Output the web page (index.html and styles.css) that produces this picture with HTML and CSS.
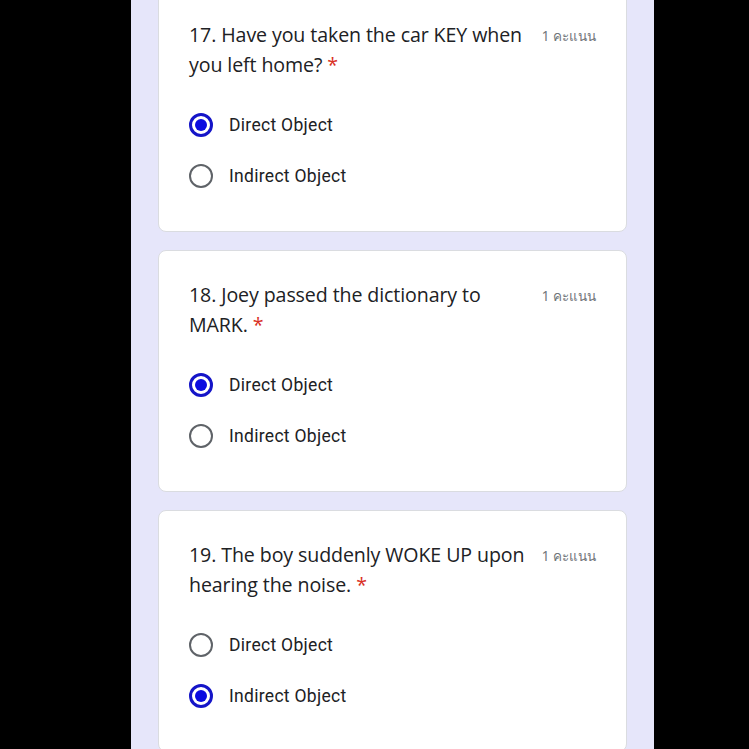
FILE: index.html
```html
<!DOCTYPE html>
<html>
<head>
<meta charset="utf-8">
<link rel="stylesheet" href="styles.css">
</head>
<body>
<div class="column">
  <div class="cards">
    <div class="card">
      <div class="head">
        <div class="question">17. Have you taken the car KEY when you left home?&nbsp;<span class="req">*</span></div>
        <div class="points">1 คะแนน</div>
      </div>
      <div class="options">
        <div class="option"><span class="radio checked"></span><span class="label">Direct Object</span></div>
        <div class="option"><span class="radio"></span><span class="label">Indirect Object</span></div>
      </div>
    </div>
    <div class="card">
      <div class="head">
        <div class="question">18. Joey passed the dictionary to MARK.&nbsp;<span class="req">*</span></div>
        <div class="points">1 คะแนน</div>
      </div>
      <div class="options">
        <div class="option"><span class="radio checked"></span><span class="label">Direct Object</span></div>
        <div class="option"><span class="radio"></span><span class="label">Indirect Object</span></div>
      </div>
    </div>
    <div class="card">
      <div class="head">
        <div class="question">19. The boy suddenly WOKE UP upon hearing the noise.&nbsp;<span class="req">*</span></div>
        <div class="points">1 คะแนน</div>
      </div>
      <div class="options">
        <div class="option"><span class="radio"></span><span class="label">Direct Object</span></div>
        <div class="option"><span class="radio checked"></span><span class="label">Indirect Object</span></div>
      </div>
    </div>
  </div>
</div>
</body>
</html>
```
FILE: styles.css
```css
html, body {
  margin: 0;
  padding: 0;
  background: #000;
  height: 749px;
  overflow: hidden;
}
.column {
  margin-left: 131px;
  width: 523px;
  height: 749px;
  background: #e6e6fa;
  box-sizing: border-box;
  padding: 0 27px;
  overflow: hidden;
}
.cards {
  margin-top: -10px;
  display: flex;
  flex-direction: column;
  gap: 18px;
}
.card {
  background: #fff;
  border: 1px solid #dadce0;
  border-radius: 8px;
  height: 242px;
  box-sizing: border-box;
  padding: 29px 30px 0 30px;
}
.head {
  display: flex;
  justify-content: space-between;
  align-items: flex-start;
  gap: 12px;
}
.question {
  font-family: "Open Sans", "Noto Sans", sans-serif;
  font-size: 19.6px;
  line-height: 30px;
  color: #202124;
  width: 342px;
  letter-spacing: -0.1px;
}
.req {
  color: #d93025;
}
.points {
  font-family: "Noto Sans", "DejaVu Sans", sans-serif;
  font-size: 13.5px;
  line-height: 30px;
  color: #70757a;
  white-space: nowrap;
  padding-top: 1px;
}
.options {
  margin-top: 20px;
  display: flex;
  flex-direction: column;
}
.option {
  height: 50.5px;
  display: flex;
  align-items: center;
  gap: 16px;
}
.radio {
  width: 24px;
  height: 24px;
  box-sizing: border-box;
  border: 2px solid #5f6368;
  border-radius: 50%;
  position: relative;
  flex: none;
}
.radio.checked {
  border: 3px solid #1515c8;
}
.radio.checked::after {
  content: "";
  position: absolute;
  left: 3px;
  top: 3px;
  width: 12px;
  height: 12px;
  border-radius: 50%;
  background: #0a0ae0;
}
.label {
  font-family: Roboto, "Liberation Sans", sans-serif;
  font-size: 17.5px;
  color: #202124;
  letter-spacing: 0.3px;
}
```
